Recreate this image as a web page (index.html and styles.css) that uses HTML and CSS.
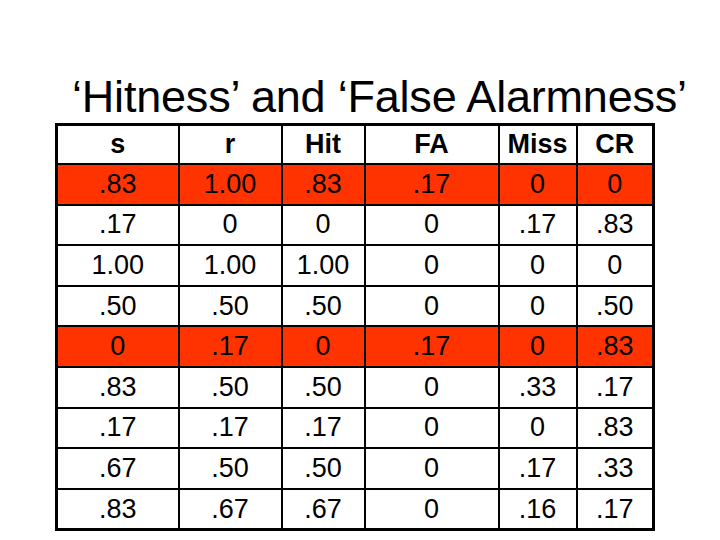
FILE: index.html
```html
<!DOCTYPE html>
<html>
<head>
<meta charset="utf-8">
<link rel="stylesheet" href="styles.css">
</head>
<body>
<h1 class="title">‘Hitness’ and ‘False Alarmness’</h1>
<table class="grid">
  <colgroup>
    <col class="c1"><col class="c2"><col class="c3"><col class="c4"><col class="c5"><col class="c6">
  </colgroup>
  <thead>
    <tr><th>s</th><th>r</th><th>Hit</th><th>FA</th><th>Miss</th><th>CR</th></tr>
  </thead>
  <tbody>
    <tr class="hl"><td>.83</td><td>1.00</td><td>.83</td><td>.17</td><td>0</td><td>0</td></tr>
    <tr><td>.17</td><td>0</td><td>0</td><td>0</td><td>.17</td><td>.83</td></tr>
    <tr><td>1.00</td><td>1.00</td><td>1.00</td><td>0</td><td>0</td><td>0</td></tr>
    <tr><td>.50</td><td>.50</td><td>.50</td><td>0</td><td>0</td><td>.50</td></tr>
    <tr class="hl"><td>0</td><td>.17</td><td>0</td><td>.17</td><td>0</td><td>.83</td></tr>
    <tr><td>.83</td><td>.50</td><td>.50</td><td>0</td><td>.33</td><td>.17</td></tr>
    <tr><td>.17</td><td>.17</td><td>.17</td><td>0</td><td>0</td><td>.83</td></tr>
    <tr><td>.67</td><td>.50</td><td>.50</td><td>0</td><td>.17</td><td>.33</td></tr>
    <tr><td>.83</td><td>.67</td><td>.67</td><td>0</td><td>.16</td><td>.17</td></tr>
  </tbody>
</table>
</body>
</html>
```
FILE: styles.css
```css
html, body {
  margin: 0;
  padding: 0;
  background: #ffffff;
}
body {
  width: 720px;
  height: 540px;
  overflow: hidden;
  font-family: "Liberation Sans", Arial, sans-serif;
  color: #000;
}
.title {
  margin: 0 0 4px 0;
  padding: 75px 0 0 72px;
  font-size: 45px;
  line-height: 44px;
  font-weight: normal;
  white-space: nowrap;
  letter-spacing: -0.2px;
}
.grid {
  margin-left: 55px;
  border-collapse: collapse;
  table-layout: fixed;
  width: 597px;
  border: 3px solid #000;
}
.c1 { width: 122px; }
.c2 { width: 103px; }
.c3 { width: 83px; }
.c4 { width: 134px; }
.c5 { width: 78px; }
.c6 { width: 77px; }
.grid th, .grid td {
  border: 2px solid #000;
  padding: 0;
  text-align: center;
  vertical-align: middle;
  font-size: 27px;
  line-height: 27px;
  height: 38.6px;
}
.grid th {
  font-weight: bold;
  height: 37px;
}
.grid td {
  font-weight: normal;
}
.grid tr.hl td {
  background: #ff3300;
}
```
